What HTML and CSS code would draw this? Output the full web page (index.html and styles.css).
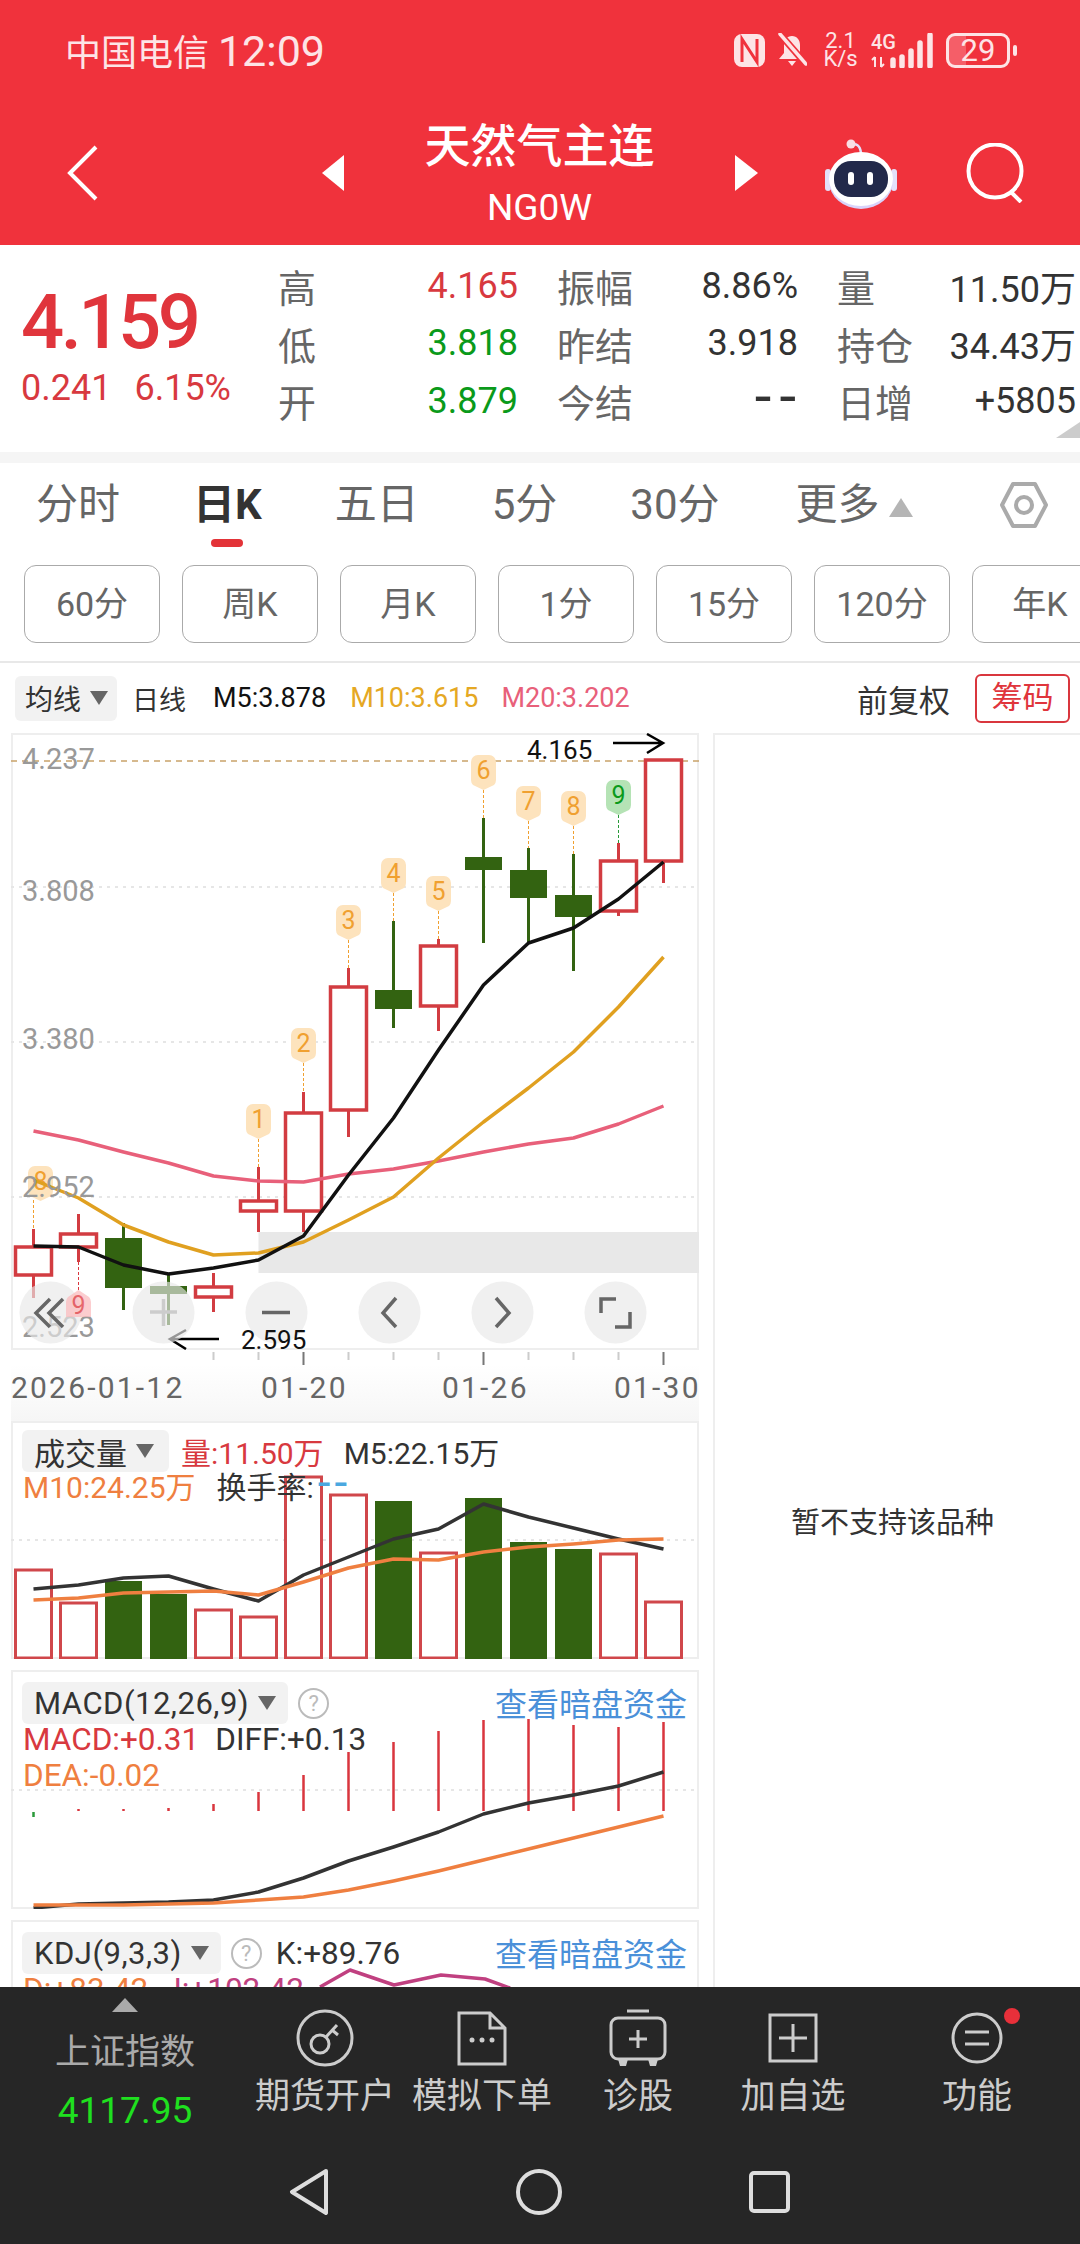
FILE: index.html
```html
<!DOCTYPE html>
<html lang="zh-CN">
<head>
  <meta charset="UTF-8">
  <title>天然气主连 NG0W</title>
  <link rel="stylesheet" href="styles.css">
</head>
<body>
  <header class="top">
    <div class="status">
      <span class="carrier">中国电信 <span class="clock">12:09</span></span>
      <div class="status-icons">
        <svg width="31" height="33" viewBox="0 0 31 33"><rect width="31" height="33" rx="8" fill="#fde4e6"/><path d="M8 28V5L23 28V5" fill="none" stroke="#f0323c" stroke-width="3"/></svg>
        <svg class="ic-bell" width="30" height="34" viewBox="0 0 30 34"><path d="M15 3c-5 0-8 4-8 9v8l-5 6h26l-5-6v-8c0-5-3-9-8-9z" fill="#fde4e6"/><path d="M11 28h8l-4 5z" fill="#fde4e6"/><path d="M2 0l26 30" stroke="#f0323c" stroke-width="7"/><path d="M3 1l26 30" stroke="#fde4e6" stroke-width="3.500" stroke-linecap="round"/></svg>
        <div class="speed"><span>2.1</span><span>K/s</span></div>
        <svg class="signal" width="62" height="35" viewBox="0 0 62 35">
          <text x="0" y="16">4G</text>
          <path d="M4 24v10M4 24l-3 3M10 24v10M10 34l3-3" fill="none" stroke="#fde4e6" stroke-width="2"/>
          <path d="M22 27v6M31 24v9M40 18v15M49 10v23M59 2v31" stroke="#fde4e6" stroke-width="5.500" stroke-linecap="round"/>
        </svg>
        <div class="battery"><span>29</span></div>
        <i class="battery-nub"></i>
      </div>
    </div>
    <div class="nav">
      <svg class="back" width="31" height="56" viewBox="0 0 31 56"><path d="M29 2L3 28l26 26" fill="none" stroke="#fff" stroke-width="4"/></svg>
      <i class="tri-left"></i>
      <div class="title">
        <h1>天然气主连</h1>
        <p>NG0W</p>
      </div>
      <i class="tri-right"></i>
      <svg class="robot" width="72" height="72" viewBox="0 0 72 72">
        <path d="M26 8c5-2 9 0 10 8" fill="none" stroke="#e3e0fa" stroke-width="2.500"/>
        <circle cx="26" cy="7" r="4.500" fill="#f9dfe4"/>
        <rect x="0" y="32" width="6" height="22" rx="3" fill="#e3e0fa"/>
        <rect x="66" y="32" width="6" height="22" rx="3" fill="#e3e0fa"/>
        <ellipse cx="36" cy="44" rx="32" ry="28" fill="#d9d3fa"/>
        <ellipse cx="36" cy="42" rx="32" ry="27" fill="#fff"/>
        <rect x="9" y="24" width="54" height="36" rx="17" fill="#22294a"/>
        <rect x="23" y="35" width="6" height="13" rx="3" fill="#fff"/>
        <rect x="42" y="35" width="6" height="13" rx="3" fill="#fff"/>
      </svg>
      <svg class="search" width="59" height="60" viewBox="0 0 59 60"><circle cx="29" cy="28" r="26.500" fill="none" stroke="#fff" stroke-width="4"/><path d="M44 48l11 11" stroke="#fff" stroke-width="4"/></svg>
    </div>
  </header>

  <section class="quote">
    <div class="price">
      <div class="last">4.159</div>
      <div class="change"><span>0.241</span><span>6.15%</span></div>
    </div>
    <div class="stats">
      <div class="stat"><span>高</span><b class="red">4.165</b></div>
      <div class="stat"><span>振幅</span><b>8.86%</b></div>
      <div class="stat"><span>量</span><b>11.50万</b></div>
      <div class="stat"><span>低</span><b class="green">3.818</b></div>
      <div class="stat"><span>昨结</span><b>3.918</b></div>
      <div class="stat"><span>持仓</span><b>34.43万</b></div>
      <div class="stat"><span>开</span><b class="green">3.879</b></div>
      <div class="stat"><span>今结</span><b class="dash">--</b></div>
      <div class="stat"><span>日增</span><b>+5805</b></div>
    </div>
    <i class="corner"></i>
  </section>

  <nav class="tabs">
    <span>分时</span>
    <span class="active">日K</span>
    <span>五日</span>
    <span>5分</span>
    <span>30分</span>
    <span class="more">更多<i></i></span>
    <svg class="hex" width="48" height="46" viewBox="0 0 48 46"><path d="M13 2h22l11 21-11 21H13L2 23z" fill="none" stroke="#aaa" stroke-width="4" stroke-linejoin="round"/><circle cx="24" cy="23" r="8" fill="none" stroke="#aaa" stroke-width="4"/></svg>
  </nav>

  <div class="periods">
    <span>60分</span><span>周K</span><span>月K</span><span>1分</span><span>15分</span><span>120分</span><span>年K</span>
  </div>

  <div class="legend">
    <div class="tag small">均线<i class="caret"></i></div>
    <span>日线</span>
    <span class="m5">M5:3.878</span>
    <span class="m10">M10:3.615</span>
    <span class="m20">M20:3.202</span>
    <span class="adjust">前复权</span>
    <span class="chips">筹码</span>
  </div>

  <main class="charts">
    <div class="left">
      <div class="panel kline">
        <svg viewBox="11 733 688 617">
          <defs>
            <path id="pin" d="M-12.500 7a7 7 0 0 1 7-7h11a7 7 0 0 1 7 7v18q0 3-2 5l-10.500 5-10.500-5q-2-2-2-5z"/>
            <path id="pin-up" d="M-12.500 27v-15q0-3 2-5l10.500-7 10.500 7q2 2 2 5v15z"/>
          </defs>
          <rect class="band" x="258.500" y="1232" width="440.500" height="41"/>
          <path class="grid" d="M11 887H699M11 1042H699M11 1197H699"/>
          <path class="top-line" d="M11 761H699"/>

          <path class="pin-line" d="M258.500 1139V1167M303.500 1063V1092M348.500 940V968M393.500 893V921M438.500 911V939M483.500 790V818M528.500 821V848M573.500 826V854M33.500 1200V1229"/>
          <path class="pin-line green-line" d="M618.500 815V843"/>
          <path class="pin-line red-line" d="M78.500 1262V1290"/>

          <path class="wick-up" d="M33.500 1229V1298M78.500 1214V1262M213.500 1273V1312M258.500 1167V1232M303.500 1092V1232M348.500 968V1137M438.500 939V1031M618.500 843V916M663.500 860V883"/>
          <path class="wick-down" d="M123.500 1223V1310M168.500 1275V1325M393.500 921V1028M483.500 818V943M528.500 848V942M573.500 854V971"/>
          <g class="body-up">
            <rect x="15.500" y="1247" width="36" height="28"/>
            <rect x="60.500" y="1234" width="36" height="13"/>
            <rect x="195.500" y="1287" width="36" height="10"/>
            <rect x="240.500" y="1201" width="36" height="10"/>
            <rect x="285.500" y="1113" width="36" height="98"/>
            <rect x="330.500" y="987" width="36" height="123"/>
            <rect x="420.500" y="946" width="36" height="60"/>
            <rect x="600.500" y="861" width="36" height="50"/>
            <rect x="645.500" y="760" width="36" height="101"/>
          </g>
          <g class="body-down">
            <rect x="105" y="1238" width="37" height="50"/>
            <rect x="150" y="1286" width="37" height="8"/>
            <rect x="375" y="990" width="37" height="19"/>
            <rect x="465" y="857" width="37" height="13"/>
            <rect x="510" y="870" width="37" height="28"/>
            <rect x="555" y="895" width="37" height="22"/>
          </g>

          <g class="pin"><use href="#pin" x="258.500" y="1104"/><text x="258.500" y="1128">1</text></g>
          <g class="pin"><use href="#pin" x="303.500" y="1028"/><text x="303.500" y="1052">2</text></g>
          <g class="pin"><use href="#pin" x="348.500" y="905"/><text x="348.500" y="929">3</text></g>
          <g class="pin"><use href="#pin" x="393.500" y="858"/><text x="393.500" y="882">4</text></g>
          <g class="pin"><use href="#pin" x="438.500" y="876"/><text x="438.500" y="900">5</text></g>
          <g class="pin"><use href="#pin" x="483.500" y="755"/><text x="483.500" y="779">6</text></g>
          <g class="pin"><use href="#pin" x="528.500" y="786"/><text x="528.500" y="810">7</text></g>
          <g class="pin"><use href="#pin" x="573.500" y="791"/><text x="573.500" y="815">8</text></g>
          <g class="pin pin-green"><use href="#pin" x="618.500" y="780"/><text x="618.500" y="804">9</text></g>
          <g class="pin"><use href="#pin" x="40.500" y="1166"/><text x="40.500" y="1190">8</text></g>

          <polyline class="ma20" points="33.500,1131 78.500,1140 123.500,1152 168.500,1163 213.500,1176 258.500,1181 303.500,1182 348.500,1174 393.500,1169 438.500,1161 483.500,1152 528.500,1144 573.500,1138 618.500,1124 663.500,1106"/>
          <polyline class="ma10" points="33.500,1180 78.500,1198 123.500,1225 168.500,1242 213.500,1255 258.500,1253 303.500,1242 348.500,1220 393.500,1197 438.500,1158 483.500,1122 528.500,1088 573.500,1052 618.500,1007 663.500,957"/>
          <polyline class="ma5" points="33.500,1246 78.500,1247 123.500,1265 168.500,1274 213.500,1268 258.500,1260 303.500,1236 348.500,1175 393.500,1118 438.500,1050 483.500,985 528.500,943 573.500,928 618.500,899 663.500,862"/>

          <text class="axis" x="22" y="769">4.237</text>
          <text class="axis" x="22" y="901">3.808</text>
          <text class="axis" x="22" y="1049">3.380</text>
          <text class="axis" x="22" y="1197">2.952</text>
          <text class="axis" x="22" y="1337">2.523</text>

          <text class="peak" x="527" y="759">4.165</text>
          <path class="arrow" d="M613 743H663M647 734l16 9-16 10"/>
          <path class="arrow" d="M219 1339H170M186 1330l-16 9 16 10"/>

          <g class="zoom-btn">
            <circle cx="50.500" cy="1312.500" r="31"/>
            <circle cx="163.500" cy="1312.500" r="31"/>
            <circle cx="276.500" cy="1312.500" r="31"/>
            <circle cx="389.500" cy="1312.500" r="31"/>
            <circle cx="502.500" cy="1312.500" r="31"/>
            <circle cx="615.500" cy="1312.500" r="31"/>
          </g>
          <g class="pin pin-red"><use href="#pin-up" x="78.500" y="1290"/><text x="78.500" y="1314">9</text></g>
          <g class="zoom-glyph">
            <path d="M50 1299l-14 14 14 14M63 1299l-14 14 14 14"/>
            <path class="faint" d="M150 1312h27M163.500 1299v27"/>
            <path d="M262 1312.500h28"/>
            <path d="M396 1298l-13 15 13 14"/>
            <path d="M496 1298l13 15-13 14"/>
            <path d="M601 1313v-14h15M630 1312v15h-15"/>
          </g>
          <text class="peak" x="241" y="1349">2.595</text>
        </svg>
      </div>

      <svg class="dates" viewBox="11 1350 688 71">
        <path class="tick" d="M213.500 1352v8M258.500 1352v8M348.500 1352v8M393.500 1352v8M438.500 1352v8M528.500 1352v8M573.500 1352v8M618.500 1352v8"/>
        <path class="tick-big" d="M303.500 1352v13M483.500 1352v13M663.500 1352v13"/>
        <text x="11" y="1398">2026-01-12</text>
        <text x="261" y="1398">01-20</text>
        <text x="442" y="1398">01-26</text>
        <text x="614" y="1398">01-30</text>
      </svg>

      <div class="panel volume">
        <svg viewBox="11 1421 688 238">
          <path class="grid" d="M11 1540H699"/>
          <g class="vol-up">
            <rect x="15.500" y="1570" width="36" height="88"/>
            <rect x="60.500" y="1603" width="36" height="55"/>
            <rect x="195.500" y="1610" width="36" height="48"/>
            <rect x="240.500" y="1617" width="36" height="41"/>
            <rect x="285.500" y="1477" width="36" height="181"/>
            <rect x="330.500" y="1495" width="36" height="163"/>
            <rect x="420.500" y="1553" width="36" height="105"/>
            <rect x="600.500" y="1554" width="36" height="104"/>
            <rect x="645.500" y="1602" width="36" height="56"/>
          </g>
          <g class="body-down">
            <rect x="105" y="1581" width="37" height="78"/>
            <rect x="150" y="1594" width="37" height="65"/>
            <rect x="375" y="1501" width="37" height="158"/>
            <rect x="465" y="1498" width="37" height="161"/>
            <rect x="510" y="1542" width="37" height="117"/>
            <rect x="555" y="1549" width="37" height="110"/>
          </g>
          <polyline class="line-dark" points="33.500,1589 78.500,1585 123.500,1578 168.500,1576 213.500,1589 258.500,1601 303.500,1575 348.500,1557 393.500,1539 438.500,1529 483.500,1504 528.500,1517 573.500,1528 618.500,1539 663.500,1549"/>
          <polyline class="line-orange" points="33.500,1600 78.500,1598 123.500,1593 168.500,1592 213.500,1591 258.500,1595 303.500,1582 348.500,1568 393.500,1559 438.500,1560 483.500,1552 528.500,1547 573.500,1544 618.500,1540 663.500,1539"/>
        </svg>
        <div class="head">
          <div class="tag">成交量<i class="caret"></i></div>
          <span class="red">量:11.50万</span>
          <span class="vol-m5">M5:22.15万</span>
        </div>
        <div class="head second">
          <span class="orange">M10:24.25万</span>
          <span>换手率:<em class="blue">--</em></span>
        </div>
      </div>

      <div class="panel macd">
        <svg viewBox="11 1670 688 239">
          <path class="grid" d="M11 1790H699"/>
          <path class="macd-up" d="M78.500 1811v-2M123.500 1811v-2M168.500 1811v-3M213.500 1811v-7M258.500 1811v-19M303.500 1811v-36M348.500 1811v-59M393.500 1811v-69M438.500 1811v-80M483.500 1811v-91M528.500 1811v-92M573.500 1811v-86M618.500 1811v-84M663.500 1811v-89"/>
          <path class="macd-down" d="M33.500 1812v5"/>
          <polyline class="line-dark" points="33.500,1908 78.500,1904 123.500,1903 168.500,1902 213.500,1900 258.500,1892 303.500,1878 348.500,1861 393.500,1847 438.500,1832 483.500,1814 528.500,1803 573.500,1795 618.500,1786 663.500,1772"/>
          <polyline class="line-orange" points="33.500,1905 78.500,1905 123.500,1905 168.500,1904 213.500,1903 258.500,1900 303.500,1897 348.500,1890 393.500,1881 438.500,1871 483.500,1860 528.500,1849 573.500,1838 618.500,1827 663.500,1816"/>
        </svg>
        <div class="head">
          <div class="tag">MACD(12,26,9)<i class="caret"></i></div>
          <i class="help">?</i>
          <a class="link">查看暗盘资金</a>
        </div>
        <div class="head line">
          <span class="red">MACD:+0.31</span>
          <span>DIFF:+0.13</span>
        </div>
        <div class="head line">
          <span class="orange">DEA:-0.02</span>
        </div>
      </div>

      <div class="panel kdj">
        <svg viewBox="11 1920 688 80">
          <polyline class="line-pink" points="320,1987 350,1970 394,1985 441,1975 485,1979 510,1988"/>
        </svg>
        <div class="head">
          <div class="tag">KDJ(9,3,3)<i class="caret"></i></div>
          <i class="help">?</i>
          <span class="kval">K:+89.76</span>
          <a class="link">查看暗盘资金</a>
        </div>
        <div class="head line">
          <span class="orange">D:+83.42</span>
          <span class="pink">J:+102.42</span>
        </div>
      </div>
    </div>

    <aside class="right">暂不支持该品种</aside>
  </main>

  <footer class="bottom">
    <div class="actions">
      <div class="index">
        <i class="up"></i>
        <span>上证指数</span>
        <b>4117.95</b>
      </div>
      <div class="action">
        <svg width="58" height="58" viewBox="0 0 58 58"><circle cx="29" cy="29" r="27" class="ln"/><circle cx="24" cy="35" r="9" class="ln"/><path class="ln" d="M30 28l11-12M36 21l6 5"/></svg>
        <span>期货开户</span>
      </div>
      <div class="action">
        <svg width="50" height="58" viewBox="0 0 50 58"><path class="ln" d="M2 4h31l15 15v36H2zM33 4v15h15"/><circle cx="15" cy="31" r="2.500" fill="#ccc"/><circle cx="25" cy="31" r="2.500" fill="#ccc"/><circle cx="35" cy="31" r="2.500" fill="#ccc"/></svg>
        <span>模拟下单</span>
      </div>
      <div class="action">
        <svg width="58" height="58" viewBox="0 0 58 58"><path class="ln" d="M18 2h22"/><rect class="ln" x="2" y="9" width="54" height="41" rx="7"/><path class="ln" d="M29 21v18M20 30h18"/><path d="M9 50h10l-2 7h-6zM39 50h10l-2 7h-6z" fill="#ccc"/></svg>
        <span>诊股</span>
      </div>
      <div class="action">
        <svg width="50" height="58" viewBox="0 0 50 50"><rect class="ln" x="2" y="2" width="46" height="46"/><path class="ln" d="M25 11v28M11 25h28"/></svg>
        <span>加自选</span>
      </div>
      <div class="action dot">
        <svg width="52" height="58" viewBox="0 0 52 52"><circle class="ln" cx="26" cy="26" r="24"/><path class="ln" d="M14 20h24M14 32h24"/></svg>
        <span>功能</span>
      </div>
    </div>
    <div class="sys">
      <svg width="40" height="46" viewBox="0 0 40 46"><path class="sys-ln" d="M37 2L3 23l34 21z"/></svg>
      <svg width="46" height="46" viewBox="0 0 46 46"><circle class="sys-ln" cx="23" cy="23" r="21"/></svg>
      <svg width="41" height="42" viewBox="0 0 41 42"><rect class="sys-ln" x="2" y="2" width="37" height="38" rx="3"/></svg>
    </div>
  </footer>
</body>
</html>
```

FILE: styles.css
```css
* {
  box-sizing: border-box;
}

html, body {
  margin: 0;
  padding: 0;
}

body {
  width: 1080px;
  height: 2244px;
  display: flex;
  flex-direction: column;
  overflow: hidden;
  background: #fff;
  color: #333;
  font-family: Roboto, "Noto Sans CJK SC", sans-serif;
}

i {
  font-style: normal;
}

/* red header */
.top {
  height: 245px;
  background: #f0323c;
  color: #fff;
}

.status {
  height: 100px;
  padding: 0 63px 0 65px;
  display: flex;
  align-items: center;
  justify-content: space-between;
}

.carrier {
  font-size: 36px;
  color: #fde4e6;
}

.clock {
  font-size: 43px;
}

.status-icons {
  display: flex;
  align-items: center;
  color: #fde4e6;
}

.ic-bell {
  margin-left: 12px;
}

.speed {
  margin-left: 17px;
  width: 33px;
  display: flex;
  flex-direction: column;
  align-items: center;
  font-size: 22px;
  line-height: 18px;
}

.signal {
  margin-left: 14px;
}

.signal text {
  font-size: 20px;
  font-weight: 500;
  fill: #fde4e6;
}

.battery {
  margin-left: 13px;
  width: 64px;
  height: 35px;
  border: 3px solid #fde4e6;
  border-radius: 9px;
  background: linear-gradient(90deg, #f55e68 29%, transparent 29%);
  font-size: 31px;
  line-height: 29px;
  text-align: center;
}

.battery-nub {
  margin-left: 3px;
  width: 4px;
  height: 11px;
  background: #fde4e6;
  border-radius: 2px;
}

.nav {
  height: 145px;
  padding-left: 67px;
  display: flex;
  align-items: center;
}

.tri-left {
  margin-left: 224px;
  border-top: 18px solid transparent;
  border-bottom: 18px solid transparent;
  border-right: 22px solid #fff;
}

.tri-right {
  border-top: 18px solid transparent;
  border-bottom: 18px solid transparent;
  border-left: 23px solid #fff;
}

.title {
  width: 391px;
  margin-top: 8px;
  text-align: center;
}

.title h1 {
  margin: 0;
  font-size: 46px;
  font-weight: 500;
  line-height: 62px;
}

.title p {
  margin: 0;
  font-size: 37px;
  line-height: 62px;
}

.robot {
  margin-left: 67px;
}

.search {
  margin-left: 69px;
}

/* quote block */
.quote {
  position: relative;
  height: 207px;
  padding: 12px 4px 0 21px;
  display: flex;
}

.price {
  width: 257px;
  flex: none;
}

.last {
  margin-top: 20px;
  font-size: 76px;
  font-weight: 500;
  line-height: 90px;
  letter-spacing: -3.500px;
  color: #e0353c;
}

.change {
  margin-top: 1px;
  display: flex;
  gap: 23px;
  font-size: 36px;
  line-height: 40px;
  color: #d8393f;
}

.stats {
  display: grid;
  grid-template-columns: 240px 241px 239px;
  grid-auto-rows: 57.500px;
  column-gap: 39px;
}

.stat {
  display: flex;
  justify-content: space-between;
  align-items: center;
}

.stat span {
  font-size: 38px;
  color: #666;
}

.stat b {
  font-size: 36px;
  font-weight: 400;
  color: #333;
}

.stat b.red {
  color: #d8393f;
}

.stat b.green {
  color: #0a9a1a;
}

.stat b.dash {
  margin-bottom: 8px;
  margin-right: -6px;
  font-size: 60px;
  line-height: 40px;
  letter-spacing: 8px;
}

.corner {
  position: absolute;
  right: 0;
  bottom: 14px;
  border-bottom: 16px solid #ccc;
  border-left: 24px solid transparent;
}

/* period tabs */
.tabs {
  height: 101px;
  padding: 0 32px 6px 36px;
  border-top: 11px solid #f5f5f5;
  display: flex;
  align-items: center;
  gap: 73px;
  font-size: 42px;
  line-height: 58px;
  color: #666;
}

.tabs span {
  position: relative;
}

.tabs .active {
  color: #333;
  font-weight: 700;
}

.tabs .active::after {
  content: "";
  position: absolute;
  left: 18px;
  bottom: -13px;
  width: 32px;
  height: 8px;
  border-radius: 4px;
  background: #e33338;
}

.more {
  margin-left: 3px;
  display: flex;
  align-items: center;
}

.more i {
  margin-left: 9px;
  margin-top: 4px;
  border-left: 12px solid transparent;
  border-right: 12px solid transparent;
  border-bottom: 19px solid #b5b5b5;
}

.hex {
  margin-left: auto;
}

.periods {
  height: 78px;
  margin-top: 12px;
  padding-left: 24px;
  display: flex;
  gap: 22px;
  overflow: hidden;
}

.periods span {
  flex: none;
  width: 136px;
  border: 1px solid #aaa;
  border-radius: 12px;
  font-size: 34px;
  line-height: 76px;
  text-align: center;
  color: #666;
}

.legend {
  height: 72px;
  margin-top: 18px;
  padding: 0 10px 0 15px;
  border-top: 2px solid #e8e8e8;
  display: flex;
  align-items: center;
  gap: 25px;
  font-size: 27px;
}

.legend .m5 {
  margin-left: 2px;
  color: #111;
}

.legend .m10 {
  margin-left: -1px;
  color: #e5a823;
}

.legend .m20 {
  margin-left: -2px;
  color: #e8607a;
}

.legend .adjust {
  margin-left: auto;
  font-size: 31px;
}

.chips {
  width: 95px;
  height: 49px;
  border: 2px solid #d9363e;
  border-radius: 6px;
  font-size: 31px;
  line-height: 43px;
  text-align: center;
  color: #e0353c;
}

.tag {
  height: 42px;
  min-width: 147px;
  flex: none;
  padding: 0 12px;
  display: inline-flex;
  align-items: center;
  background: #f2f2f2;
  border-radius: 6px;
  font-size: 31px;
  color: #333;
}

.tag.small {
  height: 45px;
  min-width: 0;
  margin-right: -10px;
  padding: 0 9px 0 10px;
  font-size: 28px;
}

.macd .tag,
.kdj .tag {
  letter-spacing: 0.500px;
}

.caret {
  margin-left: 9px;
  border-left: 9px solid transparent;
  border-right: 9px solid transparent;
  border-top: 14px solid #666;
}

/* chart column */
.charts {
  flex: 1;
  min-height: 0;
  display: flex;
  gap: 14px;
  overflow: hidden;
}

.left {
  width: 699px;
  flex: none;
  padding-left: 11px;
}

.panel {
  position: relative;
  width: 688px;
  overflow: hidden;
  box-shadow: inset 0 0 0 2px #eee;
}

.panel > svg {
  position: absolute;
  left: 0;
  top: 0;
  width: 100%;
  height: 100%;
}

.kline {
  height: 617px;
}

.volume {
  height: 238px;
}

.macd {
  height: 239px;
  margin-top: 11px;
}

.kdj {
  height: 80px;
  margin-top: 11px;
}

.dates {
  display: block;
  width: 688px;
  height: 71px;
  background: linear-gradient(#fff 20%, #f6f6f6);
}

.dates text {
  font-size: 30px;
  letter-spacing: 2.200px;
  fill: #666;
}

.tick {
  stroke: #ccc;
  stroke-width: 2;
}

.tick-big {
  stroke: #777;
  stroke-width: 2;
}

.band {
  fill: #e8e8e8;
}

.grid {
  fill: none;
  stroke: #e6e6e6;
  stroke-width: 2;
  stroke-dasharray: 3 5;
}

.top-line {
  fill: none;
  stroke: #c9a26a;
  stroke-width: 1.500;
  stroke-dasharray: 6 5;
}

.pin-line {
  fill: none;
  stroke: #f0a030;
  stroke-width: 1;
  stroke-dasharray: 3 2;
}

.pin-line.green-line {
  stroke: #2a9a3a;
}

.pin-line.red-line {
  stroke: #d9363e;
}

.wick-up {
  fill: none;
  stroke: #d23c41;
  stroke-width: 3;
}

.wick-down {
  fill: none;
  stroke: #336311;
  stroke-width: 3;
}

.body-up rect {
  fill: #fff;
  stroke: #d23c41;
  stroke-width: 3.500;
}

.body-down rect {
  fill: #336311;
}

.vol-up rect {
  fill: #fff;
  stroke: #d0474b;
  stroke-width: 3;
}

.pin use {
  fill: #fde3bd;
}

.pin text {
  font-size: 25px;
  text-anchor: middle;
  fill: #f0a030;
}

.pin-green use {
  fill: #b5e3b5;
}

.pin-green text {
  fill: #0a9a1a;
}

.pin-red {
  opacity: 0.75;
}

.pin-red use {
  fill: #fbbdbf;
}

.pin-red text {
  fill: #e0353c;
}

polyline {
  fill: none;
  stroke-width: 3.500;
  stroke-linejoin: round;
}

.ma5 {
  stroke: #111;
}

.ma10 {
  stroke: #e0a020;
}

.ma20 {
  stroke: #e8607a;
}

.line-dark {
  stroke: #333;
}

.line-orange {
  stroke: #ef7f40;
}

.line-pink {
  stroke: #c04080;
}

.axis {
  font-size: 29px;
  fill: #999;
}

.peak {
  font-size: 26px;
  fill: #111;
}

.arrow {
  fill: none;
  stroke: #000;
  stroke-width: 2.500;
}

.zoom-btn circle {
  fill: rgba(232, 232, 232, 0.65);
}

.zoom-glyph path {
  fill: none;
  stroke: #666;
  stroke-width: 3.500;
}

.zoom-glyph .faint {
  stroke: #ccc;
}

.macd-up {
  fill: none;
  stroke: #d9363e;
  stroke-width: 2.500;
}

.macd-down {
  fill: none;
  stroke: #2a9a3a;
  stroke-width: 2.500;
}

/* panel captions sit on top of the drawing */
.head {
  position: relative;
  padding: 0 12px;
  display: flex;
  align-items: center;
  gap: 12px;
  font-size: 30px;
  color: #333;
}

.macd .head,
.kdj .head {
  font-size: 31.500px;
}

.volume .head:first-of-type {
  margin-top: 8px;
  padding-left: 11px;
}

.macd .head:first-of-type {
  margin-top: 9px;
  padding-left: 11px;
}

.kdj .head:first-of-type {
  margin-top: 9px;
  padding-left: 11px;
}

.vol-m5 {
  margin-left: 8px;
}

.head.second {
  margin-top: -7px;
  height: 38px;
  gap: 21px;
}

.head.line {
  height: 36px;
  gap: 16px;
}

.head.line:nth-of-type(2) {
  margin-top: -6px;
}

.head em {
  margin-left: 4px;
  font-style: normal;
  font-size: 46px;
  line-height: 0;
  letter-spacing: 4px;
}

.help {
  width: 31px;
  height: 31px;
  margin-left: -2px;
  border: 2px solid #bbb;
  border-radius: 50%;
  font-size: 22px;
  line-height: 27px;
  text-align: center;
  color: #bbb;
}

.link {
  margin-left: auto;
  margin-bottom: 2px;
  font-size: 32px;
  color: #4a90d9;
}

.kval {
  margin-left: 2px;
}

.red {
  color: #d8393f;
}

.orange {
  color: #ef7f40;
}

.blue {
  color: #4aa8e0;
}

.pink {
  color: #c04080;
}

.right {
  flex: 1;
  padding: 770px 10px 0 0;
  border-left: 2px solid #eee;
  border-top: 2px solid #eee;
  font-size: 29px;
  line-height: 36px;
  text-align: center;
  color: #333;
}

/* dark bottom bar */
.bottom {
  height: 257px;
  flex: none;
  background: #262626;
  color: #ccc;
}

.actions {
  height: 143px;
  display: grid;
  grid-template-columns: 250px 150px 164px 148px 162px 206px;
}

.index {
  padding-top: 11px;
  display: flex;
  flex-direction: column;
  align-items: center;
}

.up {
  border-left: 13px solid transparent;
  border-right: 13px solid transparent;
  border-bottom: 14px solid #aaa;
}

.index span {
  margin-top: 16px;
  font-size: 35px;
  line-height: 50px;
  color: #aaa;
}

.index b {
  margin-top: 11px;
  font-size: 37px;
  font-weight: 400;
  line-height: 44px;
  color: #1fe01f;
}

.action {
  position: relative;
  padding-top: 22px;
  display: flex;
  flex-direction: column;
  align-items: center;
  font-size: 35px;
}

.action span {
  margin-top: 5px;
  white-space: nowrap;
  line-height: 50px;
}

.ln {
  fill: none;
  stroke: #ccc;
  stroke-width: 3;
}

.dot::after {
  content: "";
  position: absolute;
  left: 130px;
  top: 21px;
  width: 16px;
  height: 16px;
  border-radius: 50%;
  background: #e8303a;
}

.sys {
  padding: 39px 290px 0 289px;
  display: flex;
  justify-content: space-between;
  align-items: center;
}

.sys-ln {
  fill: none;
  stroke: #ddd;
  stroke-width: 4;
  stroke-linejoin: round;
}
```
